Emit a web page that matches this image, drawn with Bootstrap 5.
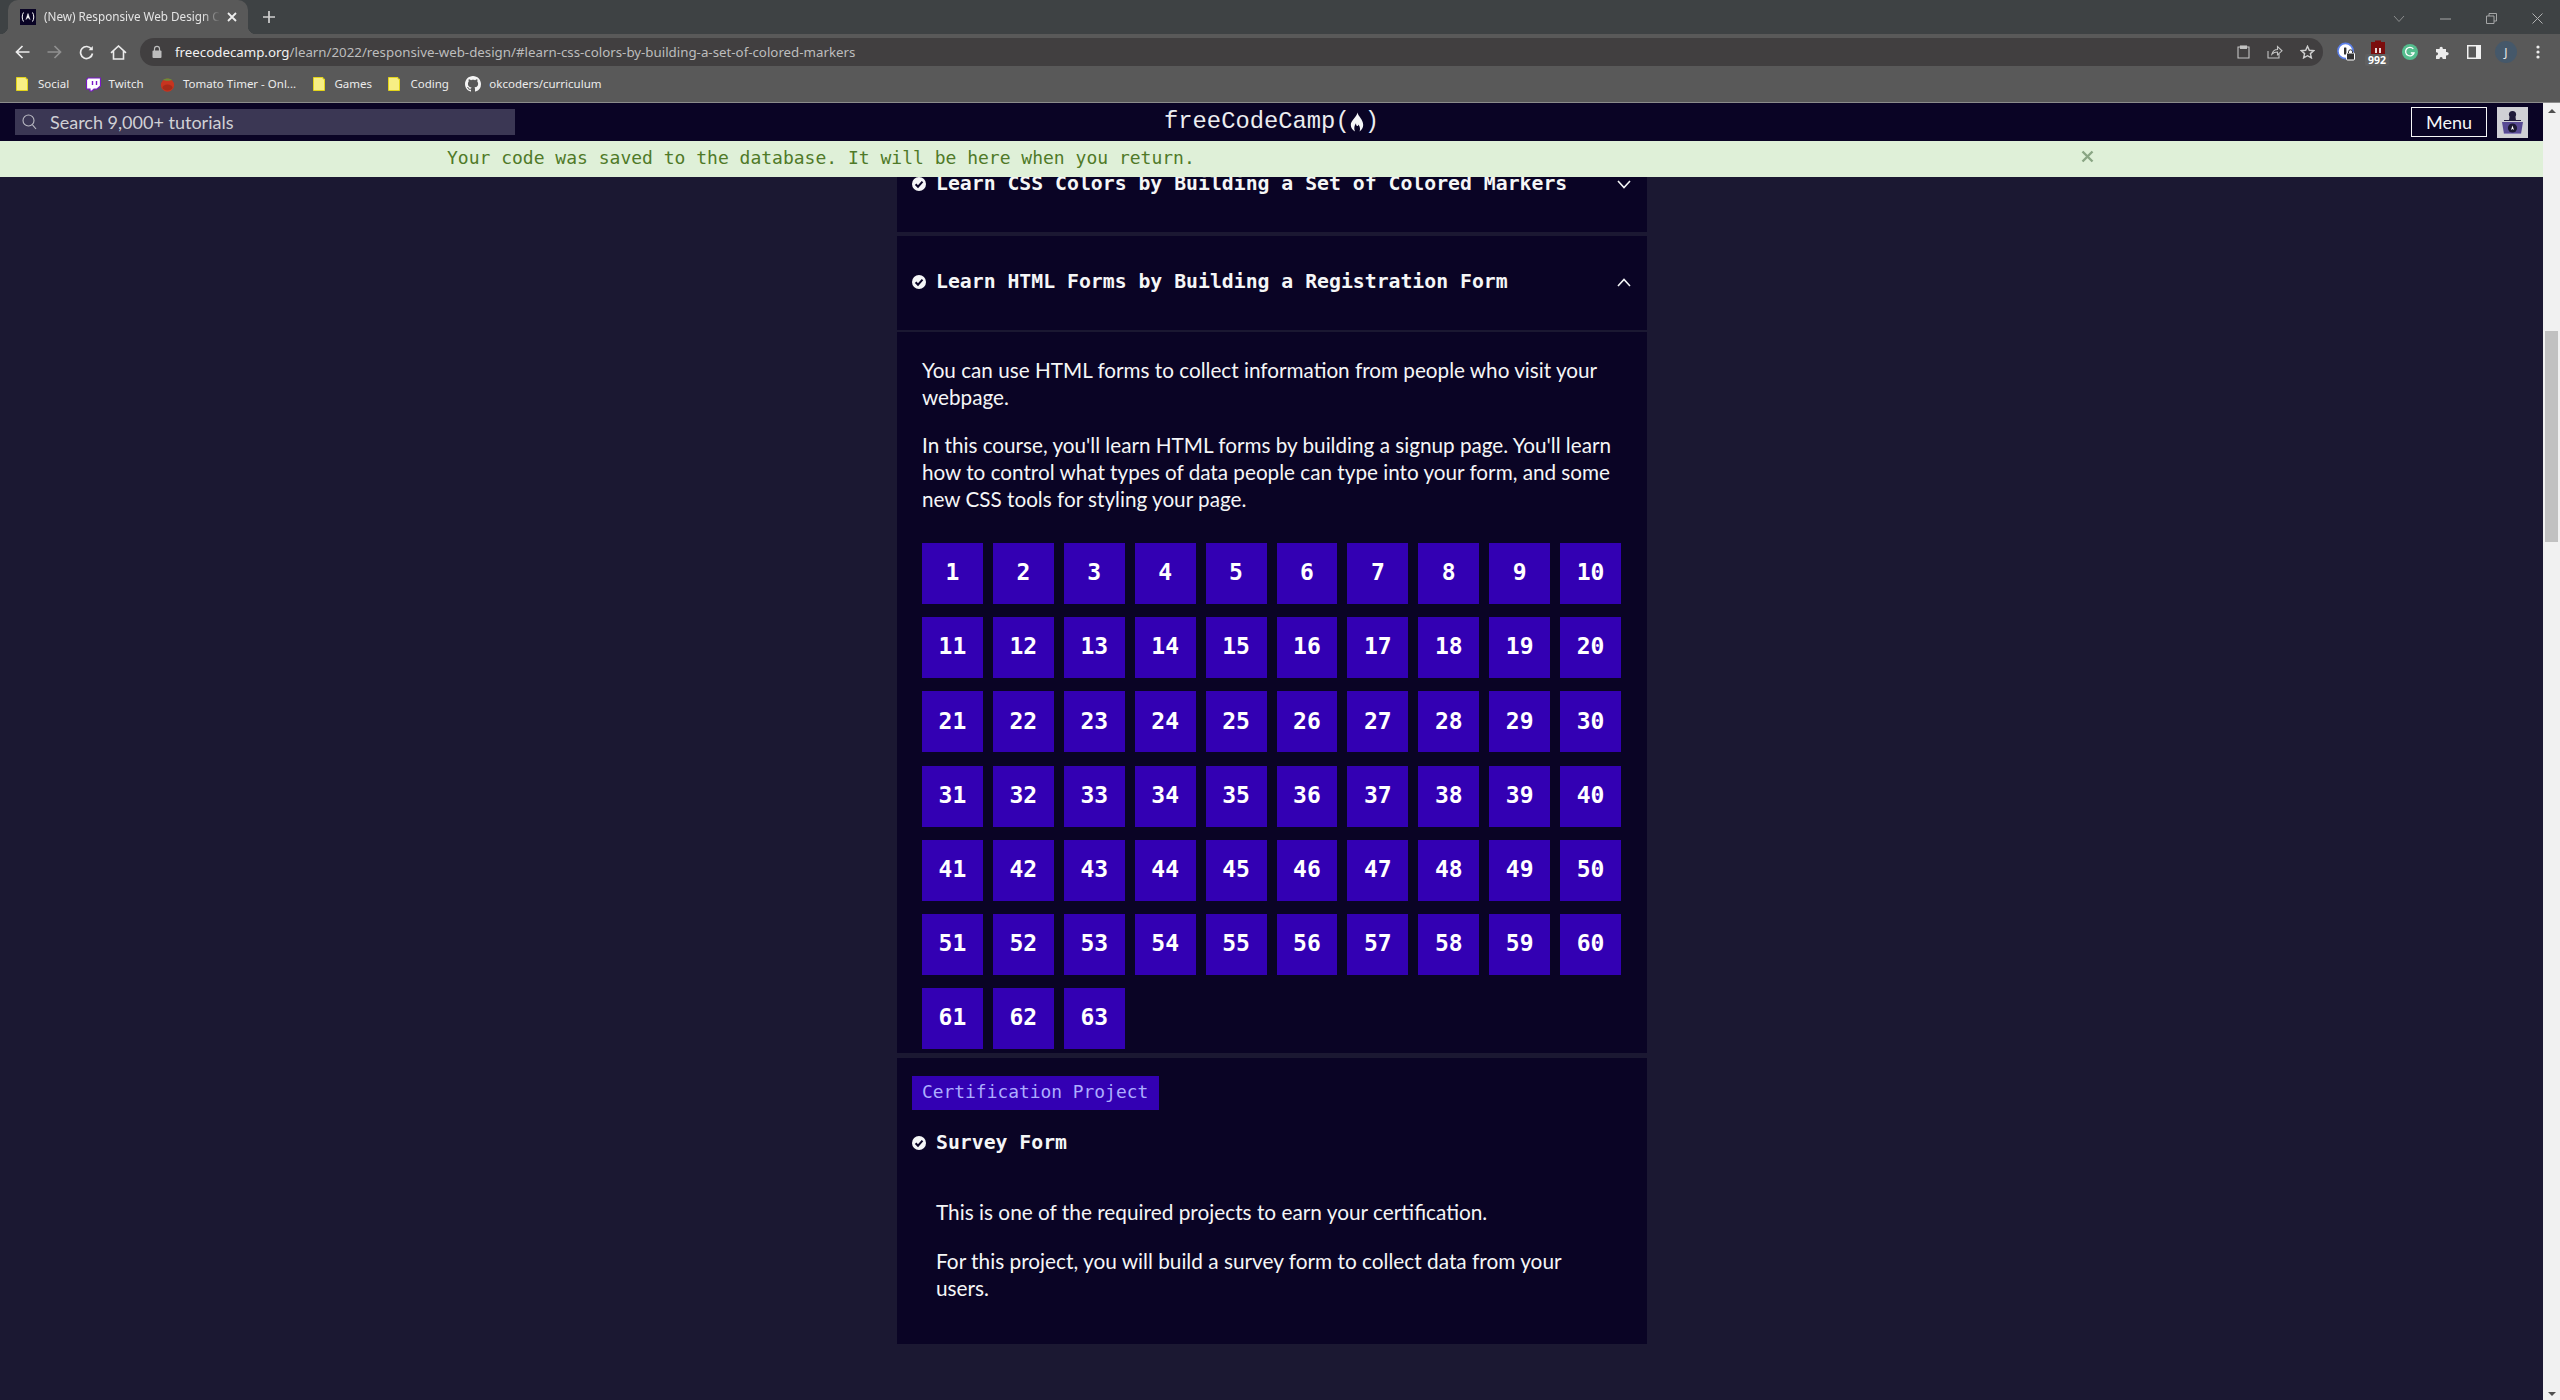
<!DOCTYPE html>
<html lang="en">
<head>
    <meta charset="UTF-8">
    <meta name="viewport" content="width=device-width, initial-scale=1.0">
    <title>Responsive Web Design</title>
    <link rel="stylesheet" href="https://cdn.jsdelivr.net/npm/bootstrap@5.3.0/dist/css/bootstrap.min.css">
    <style>
        html, body { height: 100%; overflow: hidden; background: #1b1832; }
        .chrome-ui { font-family: "Noto Sans", "Open Sans", sans-serif; }
        .tab-strip { height: 34px; background: #3e4244; }
        .tab-item { width: 240px; height: 34px; margin-left: 8px; background: #595959; border-radius: 10px 10px 0 0; padding-left: 12px; position: relative; }
        .tab-item::before, .tab-item::after { content: ""; position: absolute; bottom: 0; width: 8px; height: 8px; }
        .tab-item::before { left: -8px; background: radial-gradient(circle at 0 0, transparent 8px, #595959 8.5px); }
        .tab-item::after { right: -8px; background: radial-gradient(circle at 100% 0, transparent 8px, #595959 8.5px); }
        .tab-fav { width: 16px; height: 16px; background: #0a0425; }
        .tab-title { width: 176px; margin-left: 8px; font-size: 11.7px; color: #e4e4e4; white-space: nowrap; overflow: hidden; -webkit-mask-image: linear-gradient(90deg, #000 90%, transparent 100%); mask-image: linear-gradient(90deg, #000 90%, transparent 100%); }
        .tab-close { margin-left: 7px; }
        .tab-plus { margin-left: 14px; }
        .win-btns { width: 184px; }
        .win-slot { width: 46px; }
        .tool-bar { height: 36px; background: #595959; padding: 0 6px; }
        .tool-slot { width: 32px; height: 32px; flex: none; }
        .omni-box { height: 28px; margin: 0 7px 0 6px; background: #413f40; border-radius: 14px; padding-left: 11px; }
        .omni-url { margin-left: 12px; padding-top: 1px; font-size: 13.3px; color: #bdbdbd; white-space: nowrap; }
        .omni-url b { font-weight: 400; color: #f1f1f1; }
        .mark-bar { height: 33px; background: #595959; border-bottom: 1px solid #8c8c8c; padding: 0 0 4px 16px; font-size: 11.5px; color: #ececec; }
        .mark-item { margin-right: 16.4px; gap: 8px; white-space: nowrap; }
        .mark-gap-a { gap: 10px; }
        .ext-num { position: absolute; left: 3px; top: 18px; padding: 0 3px; background: #5f5f5f; border-radius: 2px; color: #fff; font-size: 10.5px; line-height: 12px; font-weight: 700; }
        .app-area { height: 1297px; }
        .page-col { min-width: 0; }
        .fake-scroll { width: 17px; flex: none; background: #f1f1f1; }
        .scroll-up { width: 0; height: 0; border: 4px solid transparent; border-top: 0; border-bottom: 4px solid #505050; margin-top: 6px; }
        .scroll-thumb { width: 13px; height: 211px; background: #c1c1c1; margin-top: 218px; }
        .scroll-down { width: 0; height: 0; border: 4px solid transparent; border-bottom: 0; border-top: 4px solid #505050; margin-top: auto; margin-bottom: 4px; }
        .fcc-nav { height: 38px; background: #0a0425; padding: 0 15px; position: relative; z-index: 2; }
        .nav-side { flex: 1 1 0; }
        .search-box { width: 500px; height: 26px; background: #3b3754; padding-left: 7px; color: #d0d0d5; font-family: Lato, sans-serif; font-size: 18px; line-height: 26px; }
        .search-box span { margin-left: 13px; }
        .fcc-logo { font-family: "Liberation Mono", "DejaVu Sans Mono", monospace; font-size: 23.8px; color: #ecedf0; line-height: 1; font-weight: 400; }
        .fcc-logo svg { margin: 0 .5px; }
        .menu-btn { width: 76px; height: 30px; border: 1px solid #f5f6f7; color: #f5f6f7; background: transparent; font-family: Lato, sans-serif; font-size: 18px; line-height: 28px; padding: 0; border-radius: 0; }
        .user-pic { width: 31px; height: 31px; margin-left: 10px; background: #d0d0d5; }
        .flash-bar { height: 36px; background: #dff0d8; color: #4f7a28; font-family: "DejaVu Sans Mono", monospace; font-size: 18px; padding: 0 0 4px 447px; position: relative; z-index: 2; }
        .flash-close { position: absolute; left: 2081px; top: 9px; }
        .main-scroll { height: 1223px; overflow: hidden; background: #1b1832; }
        .course-col { width: 750px; margin-left: 897px; margin-top: -41px; color: #f5f6f7; }
        .course-box { background: #0a0425; }
        .box-gap-a { margin-bottom: 4px; }
        .box-gap-b { margin-bottom: 5px; }
        .block-head { height: 96px; padding: 0 16px 0 15px; }
        .block-head-b { border-bottom: 2px solid #1b1832; padding-bottom: 2px; }
        .head-title { font-family: "DejaVu Sans Mono", monospace; font-weight: 700; font-size: 19.8px; gap: 10px; white-space: nowrap; }
        .block-body { padding: 25px 26px 4px 15px; height: 721px; }
        .intro-text { font-family: Lato, sans-serif; font-size: 20.7px; line-height: 27px; margin: 0 0 21px; padding-left: 10px; }
        .step-grid { display: grid; grid-template-columns: repeat(10, 1fr); column-gap: 10px; row-gap: 13.2px; margin-top: 30px; padding-left: 10px; }
        .step-cell { height: 61px; padding-bottom: 2px; background: #3300b3; color: #fff; font-family: "DejaVu Sans Mono", monospace; font-weight: 700; font-size: 23px; }
        .project-box { height: 286px; padding: 18px 15px 0; }
        .cert-tag { width: 247px; height: 34px; background: #3300b3; color: #adadff; font-family: "DejaVu Sans Mono", monospace; font-size: 17.9px; line-height: 32px; padding-left: 10px; white-space: nowrap; }
        .project-title { margin-top: 19px; height: 27px; }
        .project-text { margin-top: 42px; padding: 0 40px 0 24px; }
        .project-text p { font-family: Lato, sans-serif; font-size: 20.8px; line-height: 27px; margin: 0 0 22px; }
    </style>
</head>
<body>
    <div class="chrome-ui">
        <div class="tab-strip d-flex align-items-center">
            <div class="tab-item d-flex align-items-center">
                <div class="tab-fav d-flex align-items-center justify-content-center flex-none">
                    <svg width="16" height="16" viewBox="0 0 16 16" fill="none" stroke="#fff"><path d="M3.5 3.5 C1.8 6 1.8 10 3.5 12.5 M12.5 3.5 C14.2 6 14.2 10 12.5 12.5" stroke-width="1"/><path d="M8 4.5 L6 10.5 L8 8.5 L10 10.5 Z" fill="#fff" stroke-width=".5"/></svg>
                </div>
                <div class="tab-title">(New) Responsive Web Design Certification</div>
                <svg class="tab-close" width="10" height="10" viewBox="0 0 10 10" stroke="#eee" stroke-width="1.8"><path d="M1 1 L9 9 M9 1 L1 9"/></svg>
            </div>
            <svg class="tab-plus" width="14" height="14" viewBox="0 0 14 14" stroke="#d0d0d0" stroke-width="1.7"><path d="M7 1 V13 M1 7 H13"/></svg>
            <div class="win-btns d-flex align-items-center ms-auto">
                <div class="win-slot text-center"><svg width="12" height="8" viewBox="0 0 12 8" fill="none" stroke="#8b8d8e"><path d="M1 1 L6 6.5 L11 1"/></svg></div>
                <div class="win-slot text-center"><svg width="11" height="2" viewBox="0 0 11 2" stroke="#a5a6a7"><path d="M0 1 H11"/></svg></div>
                <div class="win-slot text-center"><svg width="11" height="11" viewBox="0 0 11 11" fill="none" stroke="#a5a6a7"><path d="M.5 3 H8 V10.5 H.5 Z M3 3 V.5 H10.5 V8 H8"/></svg></div>
                <div class="win-slot text-center"><svg width="11" height="11" viewBox="0 0 11 11" stroke="#b0b1b2"><path d="M.5 .5 L10.5 10.5 M10.5 .5 L.5 10.5"/></svg></div>
            </div>
        </div>

        <div class="tool-bar d-flex align-items-center">
            <div class="tool-slot d-flex align-items-center justify-content-center"><svg width="15" height="14" viewBox="0 0 15 14" fill="none" stroke="#ececec" stroke-width="1.7"><path d="M14.5 7 H1.5 M7.5 1 L1.5 7 L7.5 13"/></svg></div>
            <div class="tool-slot d-flex align-items-center justify-content-center"><svg width="15" height="14" viewBox="0 0 15 14" fill="none" stroke="#909090" stroke-width="1.7"><path d="M.5 7 H13.5 M7.5 1 L13.5 7 L7.5 13"/></svg></div>
            <div class="tool-slot d-flex align-items-center justify-content-center"><svg width="15" height="15" viewBox="0 0 15 15" fill="none" stroke="#ececec" stroke-width="1.7"><path d="M12.6 4.2 A6 6 0 1 0 13.5 8.5"/><path d="M13.8 1 V5.2 H9.6 Z" fill="#ececec" stroke="none"/></svg></div>
            <div class="tool-slot d-flex align-items-center justify-content-center"><svg width="17" height="15" viewBox="0 0 17 15" fill="none" stroke="#ececec" stroke-width="1.6"><path d="M1 7.8 L8.5 1 L16 7.8 M3.5 6 V14 H13.5 V6"/></svg></div>
            <div class="omni-box d-flex align-items-center flex-grow-1">
                <svg width="12" height="14" viewBox="0 0 12 14" fill="#bdbdbd"><rect x="1.5" y="5.5" width="9" height="7.5" rx="1"/><path d="M3.5 6 V3.8 a2.5 2.5 0 0 1 5 0 V6" fill="none" stroke="#bdbdbd" stroke-width="1.2"/></svg>
                <div class="omni-url"><b>freecodecamp.org</b>/learn/2022/responsive-web-design/#learn-css-colors-by-building-a-set-of-colored-markers</div>
                <div class="d-flex ms-auto">
                    <div class="tool-slot d-flex align-items-center justify-content-center"><svg width="13" height="14" viewBox="0 0 13 14" fill="none" stroke="#c4c4c4" stroke-width="1.1"><path d="M3.5 2 H1 V13 H12 V2 H9.5"/><rect x="3.5" y="1" width="6" height="2.4" fill="#c4c4c4"/></svg></div>
                    <div class="tool-slot d-flex align-items-center justify-content-center"><svg width="16" height="14" viewBox="0 0 16 14" fill="none" stroke="#c4c4c4" stroke-width="1.1"><path d="M1 6 V13 H12 V9 M5 9 C6 5.5 8 4.5 10.5 4.5 V1.5 L15 5.8 L10.5 9.8 V7 C8.5 7 6.5 7.5 5 9 Z"/></svg></div>
                    <div class="tool-slot d-flex align-items-center justify-content-center"><svg width="15" height="14" viewBox="0 0 15 14" fill="none" stroke="#d0d0d0" stroke-width="1.4"><path d="M7.5 1.3 L9.3 5.3 L13.7 5.7 L10.4 8.6 L11.4 12.9 L7.5 10.7 L3.6 12.9 L4.6 8.6 L1.3 5.7 L5.7 5.3 Z"/></svg></div>
                </div>
            </div>
            <div class="tool-slot d-flex align-items-center justify-content-center">
                <svg width="18" height="20" viewBox="0 0 18 20"><circle cx="8.5" cy="9" r="7.6" fill="#fff" stroke="#5b7fe8" stroke-width="1.6"/><rect x="7" y="5.5" width="2.4" height="7" rx=".5" fill="#333"/><rect x="9.5" y="11" width="8" height="7" rx="1" fill="#333" stroke="#fff"/><path d="M11.5 11 V9.8 a2 2 0 0 1 4 0 V11" stroke="#333" fill="none"/></svg>
            </div>
            <div class="tool-slot position-relative d-flex justify-content-center">
                <svg class="mt-1" width="14" height="14" viewBox="0 0 14 14"><path d="M0 2 H4 V0.5 H10 V2 H14 V14 H0 Z" fill="#7b0d0d"/><path d="M4 8 V13 H6 V8 Z M8 8 V13 H10 V8 Z" fill="#e8d8d8"/></svg>
                <span class="ext-num">992</span>
            </div>
            <div class="tool-slot d-flex align-items-center justify-content-center">
                <svg width="16" height="16" viewBox="0 0 16 16"><circle cx="8" cy="8" r="8" fill="#54bd8e"/><path d="M11.3 4.9 A4.3 4.3 0 1 0 12 9 H8.8" fill="none" stroke="#fff" stroke-width="1.3"/></svg>
            </div>
            <div class="tool-slot d-flex align-items-center justify-content-center">
                <svg width="15" height="15" viewBox="0 0 15 15" fill="#ececec"><path d="M1 4 H4.6 C4.2 1 8.2 1 7.8 4 H11 V7 C14.6 6.6 14.6 10.8 11 10.4 V14 H7.6 C8 11.2 4.2 11.2 4.6 14 H1 V10.4 C3.8 10.8 3.8 7 1 7.4 Z"/></svg>
            </div>
            <div class="tool-slot d-flex align-items-center justify-content-center">
                <svg width="14" height="14" viewBox="0 0 14 14"><rect width="14" height="14" fill="#f2f2f2"/><rect x="1.5" y="1.5" width="7.5" height="11" fill="#595959"/></svg>
            </div>
            <div class="tool-slot d-flex align-items-center justify-content-center">
                <svg width="22" height="22" viewBox="0 0 22 22"><circle cx="11" cy="11" r="11" fill="#45586a"/><text x="11" y="15.5" text-anchor="middle" font-family="Noto Sans" font-size="12" fill="#e8e8e8">J</text></svg>
            </div>
            <div class="tool-slot d-flex align-items-center justify-content-center">
                <svg width="4" height="14" viewBox="0 0 4 14" fill="#ececec"><circle cx="2" cy="2" r="1.6"/><circle cx="2" cy="7" r="1.6"/><circle cx="2" cy="12" r="1.6"/></svg>
            </div>
        </div>

        <div class="mark-bar d-flex align-items-center">
            <div class="mark-item d-flex align-items-center mark-gap-a">
                <svg width="12" height="14" viewBox="0 0 12 14"><path d="M.5 .5 H10 V2 H11.5 V13.5 H.5 Z" fill="#f7ee84" stroke="#e3d419"/></svg>Social
            </div>
            <div class="mark-item d-flex align-items-center">
                <svg width="15" height="15" viewBox="0 0 15 15"><path d="M2 1 H14.5 V9 L11 12 H8 L6 14 H4 V12 H.5 V3 Z" fill="#fff" stroke="#7a18c9" stroke-width="1.2"/><path d="M6.5 4 V8 M10.5 4 V8" stroke="#7a18c9" stroke-width="1.4"/></svg>Twitch
            </div>
            <div class="mark-item d-flex align-items-center">
                <svg width="15" height="15" viewBox="0 0 15 15"><circle cx="7.5" cy="8.2" r="6.6" fill="#c8341f"/><ellipse cx="7.5" cy="10.5" rx="5" ry="3" fill="#a82a18"/><path d="M3 3 C5 1 10 1 12 3 C10 4 5 4 3 3 Z" fill="#6d8d3a"/></svg>Tomato Timer - Onl...
            </div>
            <div class="mark-item d-flex align-items-center mark-gap-a">
                <svg width="12" height="14" viewBox="0 0 12 14"><path d="M.5 .5 H10 V2 H11.5 V13.5 H.5 Z" fill="#f7ee84" stroke="#e3d419"/></svg>Games
            </div>
            <div class="mark-item d-flex align-items-center mark-gap-a">
                <svg width="12" height="14" viewBox="0 0 12 14"><path d="M.5 .5 H10 V2 H11.5 V13.5 H.5 Z" fill="#f7ee84" stroke="#e3d419"/></svg>Coding
            </div>
            <div class="mark-item d-flex align-items-center">
                <svg width="16" height="16" viewBox="0 0 16 16" fill="#f5f5f5"><path d="M8 0C3.58 0 0 3.58 0 8c0 3.54 2.29 6.53 5.47 7.59.4.07.55-.17.55-.38 0-.19-.01-.82-.01-1.49-2.01.37-2.53-.49-2.69-.94-.09-.23-.48-.94-.82-1.13-.28-.15-.68-.52-.01-.53.63-.01 1.08.58 1.23.82.72 1.21 1.87.87 2.33.66.07-.52.28-.87.51-1.07-1.78-.2-3.64-.89-3.64-3.95 0-.87.31-1.59.82-2.15-.08-.2-.36-1.02.08-2.12 0 0 .67-.21 2.2.82.64-.18 1.32-.27 2-.27s1.36.09 2 .27c1.53-1.04 2.2-.82 2.2-.82.44 1.1.16 1.92.08 2.12.51.56.82 1.27.82 2.15 0 3.07-1.87 3.75-3.65 3.95.29.25.54.73.54 1.48 0 1.07-.01 1.93-.01 2.2 0 .21.15.46.55.38A8.01 8.01 0 0 0 16 8c0-4.42-3.58-8-8-8z"/></svg>okcoders/curriculum
            </div>
        </div>
    </div>

    <div class="app-area d-flex">
        <div class="page-col flex-grow-1">
            <nav class="fcc-nav d-flex align-items-center">
                <div class="nav-side">
                    <div class="search-box d-flex align-items-center">
                        <svg width="15" height="16" viewBox="0 0 15 16" fill="none" stroke="#b9b9c2" stroke-width="1.1"><circle cx="6.5" cy="6.5" r="5.5"/><path d="M10.5 10.8 L14 15"/></svg>
                        <span>Search 9,000+ tutorials</span>
                    </div>
                </div>
                <div class="fcc-logo d-flex align-items-center">freeCodeCamp(<svg width="14" height="20" viewBox="0 0 14 20" fill="#f5f6f7"><path d="M7.4 .5 C8 4 13.2 7.4 13.2 13 C13.2 16 11.6 18.2 9.6 19.4 C10.4 17.2 10.2 14.6 8.4 12.4 C8.2 14 7 14.8 6.2 13 L6 11.2 C4.4 13.2 3.6 16.8 5 19.4 C2.6 18.2 .8 16 .8 13 C.8 8.4 6.8 5.2 7.4 .5 Z"/></svg>)</div>
                <div class="nav-side d-flex align-items-center justify-content-end">
                    <button class="btn menu-btn">Menu</button>
                    <div class="user-pic">
                        <svg width="31" height="31" viewBox="0 0 31 31"><circle cx="15.5" cy="7.5" r="3.6" fill="#1f1a3a"/><path d="M12.5 10 H18.5 L19 13.5 H12 Z" fill="#1f1a3a"/><rect x="7" y="13" width="17" height="1" fill="#1f1a3a"/><path d="M5 15 H26 L24 27 H7 Z" fill="#584a93"/><rect x="7" y="26" width="17" height="1" fill="#8a7fba"/><circle cx="15.5" cy="21" r="4.6" fill="#1b1832"/><path d="M15.5 18.6 L14 23 L15.5 22 L17 23 Z" fill="#fff"/></svg>
                    </div>
                </div>
            </nav>
            <div class="flash-bar d-flex align-items-center">
                Your code was saved to the database. It will be here when you return.
                <svg class="flash-close" width="13" height="13" viewBox="0 0 13 13" stroke="#8aa684" stroke-width="2.4"><path d="M1.5 1.5 L11.5 11.5 M11.5 1.5 L1.5 11.5"/></svg>
            </div>

            <main class="main-scroll">
                <div class="course-col">
                    <section class="course-box box-gap-a">
                        <div class="block-head d-flex align-items-center justify-content-between">
                            <div class="head-title d-flex align-items-center">
                                <svg width="14" height="14" viewBox="0 0 14 14"><circle cx="7" cy="7" r="7" fill="#f5f6f7"/><path d="M3.6 7.2 L6 9.7 L10.5 4.7" fill="none" stroke="#0a0425" stroke-width="2"/></svg>
                                Learn CSS Colors by Building a Set of Colored Markers
                            </div>
                            <svg width="14" height="9" viewBox="0 0 14 9" fill="none" stroke="#f5f6f7" stroke-width="1.6"><path d="M1 1 L7 7.5 L13 1"/></svg>
                        </div>
                    </section>

                    <section class="course-box box-gap-b">
                        <div class="block-head block-head-b d-flex align-items-center justify-content-between">
                            <div class="head-title d-flex align-items-center">
                                <svg width="14" height="14" viewBox="0 0 14 14"><circle cx="7" cy="7" r="7" fill="#f5f6f7"/><path d="M3.6 7.2 L6 9.7 L10.5 4.7" fill="none" stroke="#0a0425" stroke-width="2"/></svg>
                                Learn HTML Forms by Building a Registration Form
                            </div>
                            <svg width="14" height="9" viewBox="0 0 14 9" fill="none" stroke="#f5f6f7" stroke-width="1.6"><path d="M1 8 L7 1.5 L13 8"/></svg>
                        </div>
                        <div class="block-body">
                            <p class="intro-text">You can use HTML forms to collect information from people who visit your webpage.</p>
                            <p class="intro-text mb-0">In this course, you'll learn HTML forms by building a signup page. You'll learn how to control what types of data people can type into your form, and some new CSS tools for styling your page.</p>
                            <div class="step-grid" id="steps"></div>
                        </div>
                    </section>

                    <section class="course-box project-box">
                        <div class="cert-tag">Certification Project</div>
                        <div class="project-title head-title d-flex align-items-center">
                            <svg width="14" height="14" viewBox="0 0 14 14"><circle cx="7" cy="7" r="7" fill="#f5f6f7"/><path d="M3.6 7.2 L6 9.7 L10.5 4.7" fill="none" stroke="#0a0425" stroke-width="2"/></svg>
                            Survey Form
                        </div>
                        <div class="project-text">
                            <p>This is one of the required projects to earn your certification.</p>
                            <p>For this project, you will build a survey form to collect data from your users.</p>
                        </div>
                    </section>
                </div>
            </main>
        </div>
        <div class="fake-scroll d-flex flex-column align-items-center">
            <div class="scroll-up"></div>
            <div class="scroll-thumb"></div>
            <div class="scroll-down"></div>
        </div>
    </div>

    <script>
        const steps = document.getElementById("steps");
        for (let i = 1; i <= 63; i++) {
            const cell = document.createElement("a");
            cell.className = "step-cell d-flex align-items-center justify-content-center text-decoration-none";
            cell.textContent = i;
            steps.appendChild(cell);
        }
    </script>
    <script src="https://cdn.jsdelivr.net/npm/bootstrap@5.3.0/dist/js/bootstrap.bundle.min.js"></script>
</body>
</html>
